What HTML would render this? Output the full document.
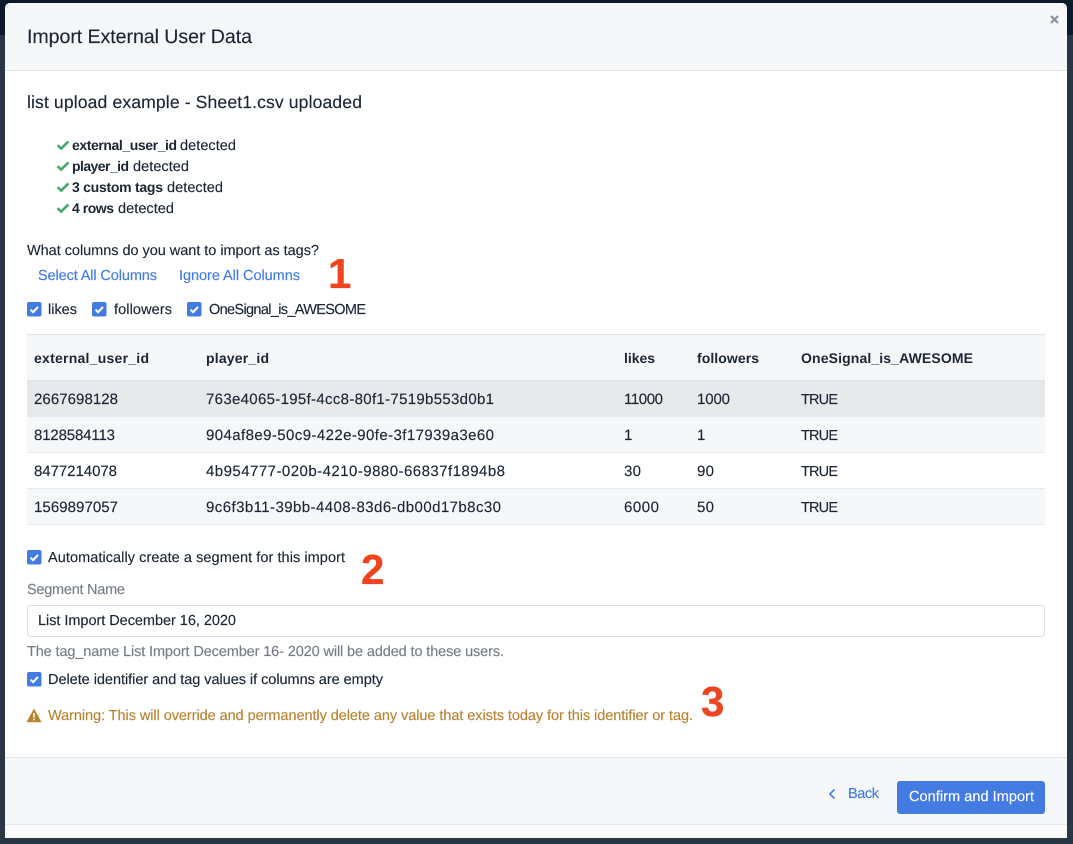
<!DOCTYPE html>
<html><head><meta charset="utf-8"><title>Import External User Data</title>
<style>
html,body{margin:0;padding:0;background:#2a3644;width:1073px;height:844px;overflow:hidden}
svg{display:block;position:absolute;left:0;top:0}
text{font-family:"Liberation Sans",Arial,sans-serif;font-size:14.5px;fill:#1b2534;stroke:#1b2534;stroke-width:.15;text-rendering:geometricPrecision}
.b{font-weight:bold;font-size:14px;stroke-width:0}
.d{font-size:15px}
.a{fill:#3f7be6;stroke:#3f7be6}
.g{fill:#767c86;stroke:#767c86}
.w{fill:#b9822f;stroke:#b9822f}
.n{font-weight:bold;font-size:42px;fill:#ee441f;stroke:#ee441f;stroke-width:.3}
</style></head><body>
<svg width="1073" height="844" viewBox="0 0 1073 844" xmlns="http://www.w3.org/2000/svg" lengthAdjust="spacing">
<defs>
<g id="cb"><rect width="14.5" height="14.5" rx="2" fill="#447be3"/><path d="M3.5 7.6 L6.1 10.2 L11 4.9" fill="none" stroke="#fff" stroke-width="2"/></g>
<path id="ck" d="M0.6 5.2 L4.2 8.6 L11.4 1.4" fill="none" stroke="#49a96a" stroke-width="2.6"/>
</defs>
<rect width="1073" height="844" fill="#2a3644"/>
<rect width="1073" height="35" fill="#0c1a2b"/>
<rect x="5" y="3" width="1062" height="835" rx="5" fill="#fff"/>
<path d="M5 70 V8 a5 5 0 0 1 5-5 H1062 a5 5 0 0 1 5 5 V70 Z" fill="#f6f7f9"/>
<rect x="5" y="70" width="1062" height="1" fill="#e4e5e7"/>
<rect x="5" y="757" width="1062" height="67" fill="#f6f7f9"/>
<rect x="5" y="757" width="1062" height="1" fill="#e4e5e7"/>
<rect x="5" y="824" width="1062" height="1" fill="#e4e5e7"/>
<rect x="5" y="825" width="1062" height="13" fill="#fafafa"/>
<path d="M1051 16 L1058 23 M1058 16 L1051 23" stroke="#8b93a0" stroke-width="2.2" fill="none"/>

<text x="27" y="43" textLength="225" style="font-size:19.6px">Import External User Data</text>
<text x="27" y="108" textLength="335" style="font-size:17.6px">list upload example - Sheet1.csv uploaded</text>

<use href="#ck" x="57" y="140"/><text class="b" x="72" y="150" textLength="105">external_user_id</text><text x="180" y="150" textLength="56">detected</text>
<use href="#ck" x="57" y="161"/><text class="b" x="72" y="171" textLength="57">player_id</text><text x="133" y="171" textLength="56">detected</text>
<use href="#ck" x="57" y="182"/><text class="b" x="72" y="192" textLength="91">3 custom tags</text><text x="167" y="192" textLength="56">detected</text>
<use href="#ck" x="57" y="203"/><text class="b" x="72" y="213" textLength="42">4 rows</text><text x="118" y="213" textLength="56">detected</text>

<text x="27" y="255" textLength="292">What columns do you want to import as tags?</text>
<text class="a" x="38" y="280" textLength="119">Select All Columns</text>
<text class="a" x="179" y="280" textLength="121">Ignore All Columns</text>
<text class="n" x="328" y="288">1</text>

<use href="#cb" x="27" y="302"/><text x="48" y="314" textLength="29">likes</text>
<use href="#cb" x="92" y="302"/><text x="114" y="314" textLength="58">followers</text>
<use href="#cb" x="187" y="302"/><text x="209" y="314" textLength="157">OneSignal_is_AWESOME</text>

<rect x="27" y="334" width="1018" height="47" fill="#f6f7f9"/>
<rect x="27" y="334" width="1018" height="1" fill="#dfe2e6"/>
<rect x="27" y="380" width="1018" height="1" fill="#dfe2e6"/>
<rect x="27" y="381" width="1018" height="36" fill="#e8e9eb"/>
<rect x="27" y="417" width="1018" height="35" fill="#f6f7f9"/>
<rect x="27" y="452" width="1018" height="1" fill="#e7e9ec"/>
<rect x="27" y="488" width="1018" height="1" fill="#e7e9ec"/>
<rect x="27" y="489" width="1018" height="35" fill="#f6f7f9"/>
<rect x="27" y="524" width="1018" height="1" fill="#e7e9ec"/>

<text class="b" x="34" y="363" textLength="115">external_user_id</text>
<text class="b" x="206" y="363" textLength="63">player_id</text>
<text class="b" x="624" y="363" textLength="31">likes</text>
<text class="b" x="697" y="363" textLength="62">followers</text>
<text class="b" x="801" y="363" textLength="172">OneSignal_is_AWESOME</text>

<text class="d" x="34" y="404" textLength="84">2667698128</text>
<text class="d" x="206" y="404" textLength="288">763e4065-195f-4cc8-80f1-7519b553d0b1</text>
<text class="d" x="624" y="404" textLength="39">11000</text>
<text class="d" x="697" y="404" textLength="33">1000</text>
<text x="801" y="404" textLength="37">TRUE</text>

<text class="d" x="34" y="440" textLength="81">8128584113</text>
<text class="d" x="206" y="440" textLength="288">904af8e9-50c9-422e-90fe-3f17939a3e60</text>
<text class="d" x="624" y="440">1</text>
<text class="d" x="697" y="440">1</text>
<text x="801" y="440" textLength="37">TRUE</text>

<text class="d" x="34" y="476" textLength="83">8477214078</text>
<text class="d" x="206" y="476" textLength="299">4b954777-020b-4210-9880-66837f1894b8</text>
<text class="d" x="624" y="476" textLength="17">30</text>
<text class="d" x="697" y="476" textLength="17">90</text>
<text x="801" y="476" textLength="37">TRUE</text>

<text class="d" x="34" y="512" textLength="84">1569897057</text>
<text class="d" x="206" y="512" textLength="295">9c6f3b11-39bb-4408-83d6-db00d17b8c30</text>
<text class="d" x="624" y="512" textLength="35">6000</text>
<text class="d" x="697" y="512" textLength="17">50</text>
<text x="801" y="512" textLength="37">TRUE</text>

<use href="#cb" x="27" y="550"/><text x="48" y="562" textLength="297">Automatically create a segment for this import</text>
<text class="n" x="361" y="584">2</text>
<text class="g" x="27" y="594" textLength="98">Segment Name</text>
<rect x="27.5" y="605.5" width="1017" height="31" rx="3" fill="#fff" stroke="#dfe1e5"/>
<text x="38" y="625" textLength="198">List Import December 16, 2020</text>
<text class="g" x="27" y="656" textLength="477">The tag_name List Import December 16- 2020 will be added to these users.</text>
<use href="#cb" x="27" y="672"/><text x="48" y="684" textLength="335">Delete identifier and tag values if columns are empty</text>
<path d="M34 708.5 L41.2 721.5 a0.6 0.6 0 0 1 -0.5 0.8 H27.3 a0.6 0.6 0 0 1 -0.5 -0.8 Z" fill="#b9822f"/>
<rect x="33.2" y="713" width="1.6" height="4.5" fill="#fff"/><rect x="33.2" y="718.6" width="1.6" height="1.7" fill="#fff"/>
<text class="w" x="48" y="720" textLength="645">Warning: This will override and permanently delete any value that exists today for this identifier or tag.</text>
<text class="n" x="701" y="716">3</text>

<path d="M834.5 789.5 L829.8 794 L834.5 798.5" fill="none" stroke="#447be3" stroke-width="1.6"/>
<text class="a" x="848" y="798" textLength="31">Back</text>
<rect x="897" y="781" width="148" height="33" rx="3" fill="#447be3"/>
<text x="909" y="801" textLength="125" style="fill:#fff;stroke:#fff">Confirm and Import</text>
</svg>
</body></html>
